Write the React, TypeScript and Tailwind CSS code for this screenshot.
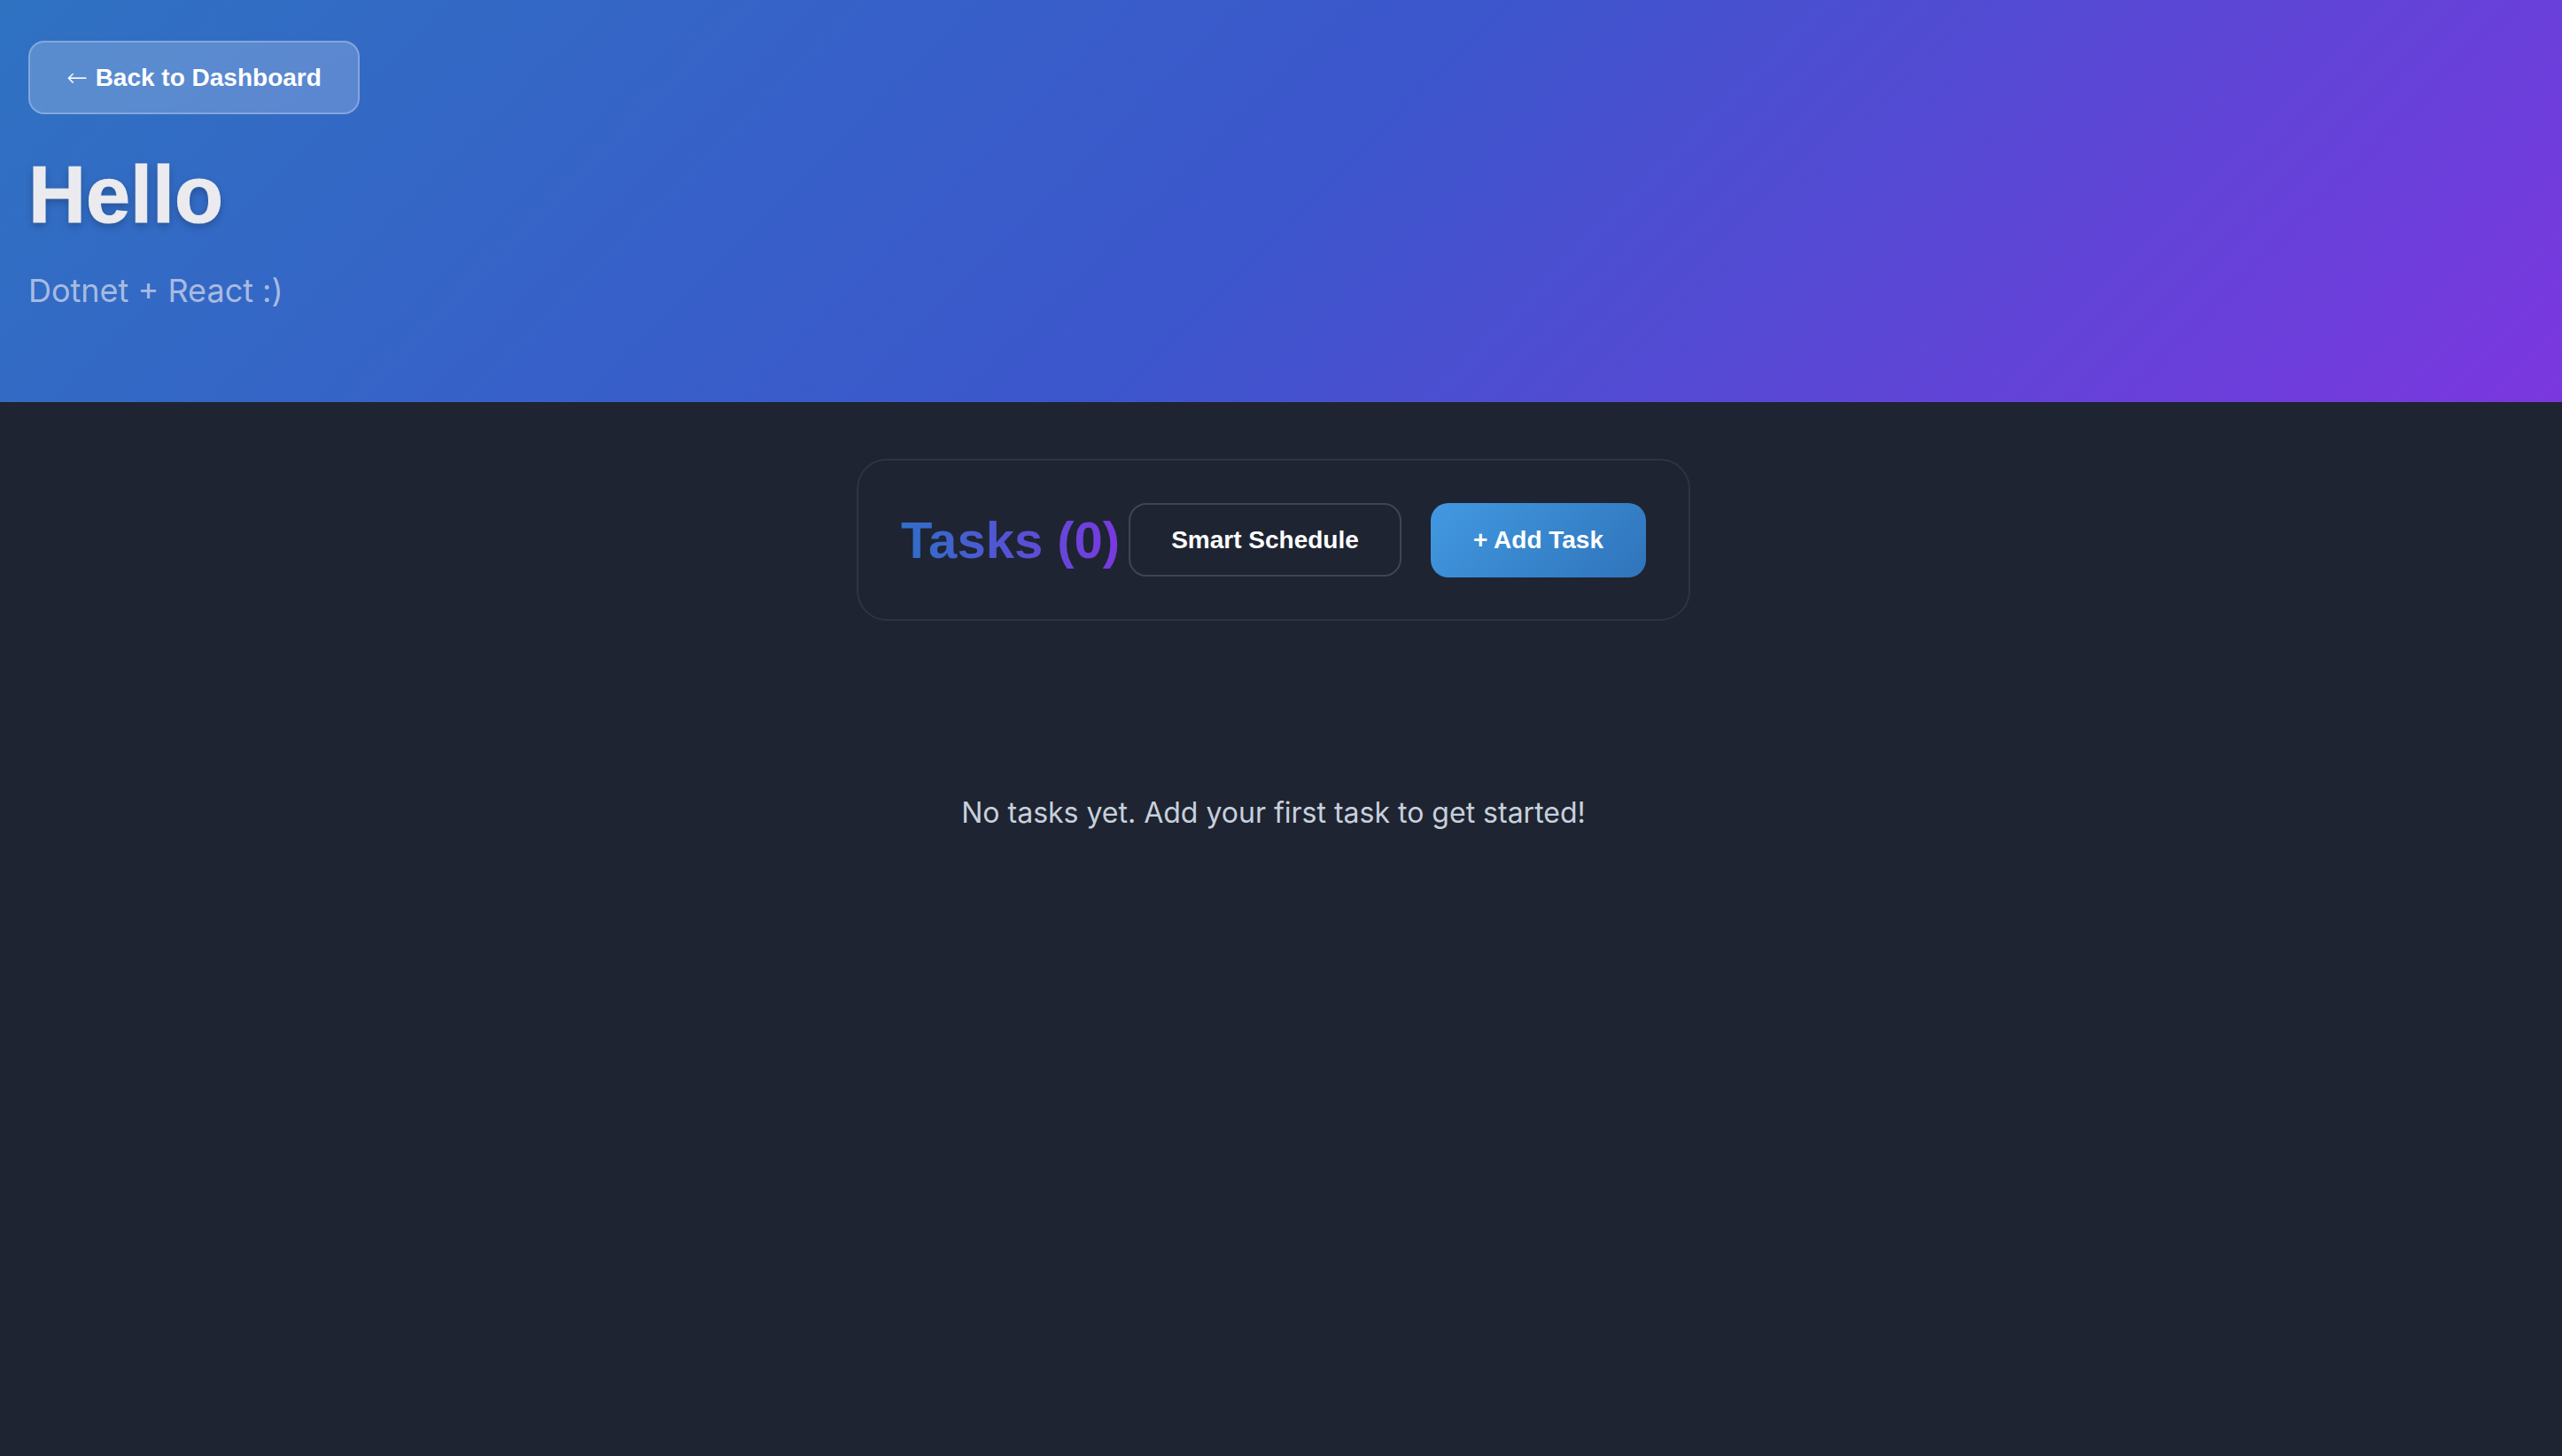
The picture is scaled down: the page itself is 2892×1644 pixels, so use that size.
export default function App() {
  return (
    <div className="min-h-screen bg-[#1e2431] font-['Inter','Noto_Sans',sans-serif]">
      <header className="h-[454px] bg-[linear-gradient(135deg,#2f72c2_0%,#3c56cc_50%,#7b37df_100%)] pl-[32px] pt-[46px]">
        <button className="flex h-[83px] w-[374px] items-center justify-center gap-[9px] rounded-[18px] border-2 border-white/25 bg-white/20 font-['Liberation_Sans',Arial,sans-serif] text-[28px] font-bold text-white">
          <span className="font-['DejaVu_Sans',sans-serif] font-extralight">←</span>
          Back to Dashboard
        </button>
        <h1 className="mt-[46px] font-['Liberation_Sans',Arial,sans-serif] text-[90px] leading-[90px] font-bold text-[#ebebef] [-webkit-text-stroke:1px_#ebebef] [text-shadow:0_4px_10px_rgba(0,0,0,0.25)]">
          Hello
        </h1>
        <p className="mt-[45px] text-[36px] leading-[36px] text-[#b9c6e6]/90">Dotnet + React :)</p>
      </header>

      <main className="flex flex-col items-center pr-[17px] pt-[64px]">
        <div className="flex h-[183px] w-[941px] items-center justify-between rounded-[34px] border-2 border-[#2c3545] bg-[#1e2432] px-[48px]">
          <h2 className="bg-[linear-gradient(90deg,#2f6fc8,#7a38e0)] bg-clip-text font-['Liberation_Sans',Arial,sans-serif] text-[58px] font-bold text-transparent">
            Tasks (0)
          </h2>
          <div className="flex items-center gap-[33px]">
            <button className="flex h-[83px] w-[308px] items-center justify-center rounded-[20px] border-2 border-[#3d4656] bg-transparent font-['Liberation_Sans',Arial,sans-serif] text-[28px] font-bold text-white">
              Smart Schedule
            </button>
            <button className="flex h-[84px] w-[243px] items-center justify-center rounded-[20px] bg-[linear-gradient(135deg,#4299e1,#2f74bb)] font-['Liberation_Sans',Arial,sans-serif] text-[28px] font-bold text-white">
              + Add Task
            </button>
          </div>
        </div>

        <p className="mt-[197px] text-[32px] leading-[40px] text-[#c7d0dc]">
          No tasks yet. Add your first task to get started!
        </p>
      </main>
    </div>
  );
}
